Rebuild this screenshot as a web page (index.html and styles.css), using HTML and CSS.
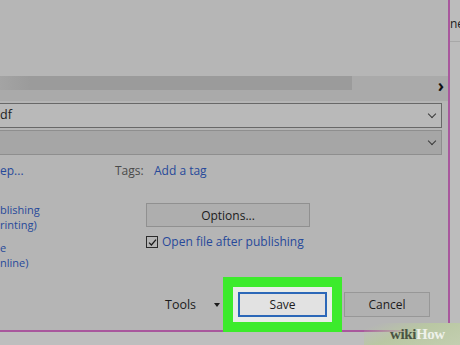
FILE: index.html
```html
<!DOCTYPE html>
<html lang="en">
<head>
    <meta charset="UTF-8">
    <meta name="viewport" content="width=device-width, initial-scale=1.0">
    <title>Publish as PDF</title>
    <link rel="stylesheet" href="styles.css">
</head>
<body>
    <div class="screen">
        <div class="window">
            <div class="dialog">
                <div class="top"></div>

                <div class="scroll-band">
                    <div class="scroll-thumb"></div>
                    <span class="scroll-arrow">&#x203A;</span>
                </div>

                <div class="field field-name">df<span class="chev"></span></div>
                <div class="field field-type"><span class="chev"></span></div>

                <div class="meta">
                    <div class="meta-left"><a class="link">ep...</a></div>
                    <span class="tags-label">Tags:</span>
                    <a class="link">Add a tag</a>
                </div>

                <div class="lower">
                    <div class="optimize">
                        <div class="group">
                            <a class="link">blishing</a>
                            <a class="link">rinting)</a>
                        </div>
                        <div class="group">
                            <a class="link">e</a>
                            <a class="link">nline)</a>
                        </div>
                    </div>
                    <div class="publish-opts">
                        <button class="btn btn-options">Options...</button>
                        <label class="check">
                            <span class="box">
                                <svg width="9" height="9" viewBox="0 0 9 9"><path d="M1 4.6 L3.4 7 L8 1.6" fill="none" stroke="#1b1b1b" stroke-width="1.3"/></svg>
                            </span>
                            <span class="link">Open file after publishing</span>
                        </label>
                    </div>
                </div>

                <div class="footer">
                    <span class="tools">Tools</span>
                    <span class="caret"></span>
                    <button class="btn btn-save">Save</button>
                    <button class="btn btn-cancel">Cancel</button>
                </div>
            </div>
            <div class="side">
                <span class="side-text">ne</span>
                <div class="side-rule"></div>
            </div>
        </div>
        <div class="below"></div>
        <div class="logo"><span class="logo-wiki">wiki</span><span class="logo-how">How</span></div>
    </div>
</body>
</html>
```

FILE: styles.css
```css
* {
    margin: 0;
    padding: 0;
    box-sizing: border-box;
}

body {
    background: #b5b5b5;
    font-family: "Open Sans", "Noto Sans", sans-serif;
    font-size: 12px;
    color: #1c1c1c;
}

.screen {
    width: 460px;
    height: 345px;
    position: relative;
    overflow: hidden;
}

.window {
    display: flex;
    height: 332px;
}

.dialog {
    width: 450px;
    height: 332px;
    background: #b5b5b5;
    border-right: 2px solid #a9579d;
    border-bottom: 2px solid #a9579d;
    display: flex;
    flex-direction: column;
}

.top {
    height: 76px;
    background: #b6b6b6;
}

.scroll-band {
    height: 25px;
    background: #aaaaaa;
    position: relative;
}

.scroll-thumb {
    width: 352px;
    height: 14px;
    background: linear-gradient(to right, #a4a4a4, #9b9b9b 30px);
}

.scroll-arrow {
    position: absolute;
    right: 4px;
    top: -2px;
    font-size: 17px;
    font-weight: 700;
    color: #111;
}

.field {
    width: 442px;
    height: 25px;
    margin-top: 2px;
    position: relative;
    display: flex;
    align-items: center;
    line-height: 1;
}

.field-name {
    background: #b9b9b9;
    border: 1px solid #686868;
    border-left: none;
    font-size: 12.5px;
}

.field-type {
    background: #a6a6a6;
    border: 1px solid #8e8e8e;
    border-left: none;
}

.chev {
    position: absolute;
    right: 6px;
    top: 7px;
    width: 6px;
    height: 6px;
    border-right: 1.3px solid #3a3a3a;
    border-bottom: 1.3px solid #3a3a3a;
    transform: rotate(45deg);
}

.link {
    color: #27499a;
    text-decoration: none;
}

.meta {
    display: flex;
    line-height: 16px;
    margin-top: 8px;
}

.meta-left {
    width: 115px;
}

.tags-label {
    color: #4a4a4a;
    width: 39px;
}

.lower {
    display: flex;
    margin-top: 24px;
}

.optimize {
    width: 146px;
    display: flex;
    flex-direction: column;
    gap: 8px;
    margin-top: -1px;
}

.group {
    display: flex;
    flex-direction: column;
    font-size: 11px;
    line-height: 15px;
}

.publish-opts {
    display: flex;
    flex-direction: column;
}

.btn {
    font-family: inherit;
    font-size: 12px;
    color: #1c1c1c;
    background: #aeaeae;
    border: 1px solid #909090;
    height: 25px;
}

.btn-options {
    width: 164px;
    height: 24px;
}

.check {
    display: flex;
    align-items: center;
    margin-top: 7px;
    line-height: 16px;
}

.box {
    width: 12px;
    height: 12px;
    border: 1px solid #2b2b2b;
    display: flex;
    align-items: center;
    justify-content: center;
    margin-right: 4px;
}

.footer {
    display: flex;
    align-items: center;
    margin-top: auto;
    margin-bottom: 13px;
}

.tools {
    margin-left: 165px;
    font-size: 12.5px;
}

.caret {
    margin-left: 18px;
    border-left: 3.5px solid transparent;
    border-right: 3.5px solid transparent;
    border-top: 4px solid #1c1c1c;
}

.btn-save {
    margin-left: 18px;
    width: 89px;
    background: #e2e2e2;
    border: 2px solid #2c68b8;
    box-shadow: 0 0 0 5px #e9ece8, 0 0 0 15px #3ceb2c;
}

.btn-cancel {
    margin-left: 17px;
    width: 86px;
    background: #b1b1b1;
    border-color: #979797;
}

.side {
    flex: 1;
    background: #bcbcbc;
    padding-top: 15px;
    overflow: hidden;
}

.side-text {
    font-size: 12px;
    line-height: 16px;
    white-space: nowrap;
}

.side-rule {
    margin-top: 9px;
    height: 1px;
    background: #a8a8a8;
}

.below {
    height: 13px;
    background: #bebebe;
}

.logo {
    position: absolute;
    right: 0;
    bottom: 0;
    width: 96px;
    height: 22px;
    padding: 4px 0 0 26px;
    background: linear-gradient(160deg, rgba(190, 204, 168, 0) 10%, #b9c7a3 45%, #c3ceb0);
    font-family: "Liberation Serif", serif;
    font-weight: 700;
    font-size: 15px;
    line-height: 15px;
    letter-spacing: -0.4px;
}

.logo-wiki {
    color: #4a5443;
}

.logo-how {
    color: #eef1ea;
}
```
